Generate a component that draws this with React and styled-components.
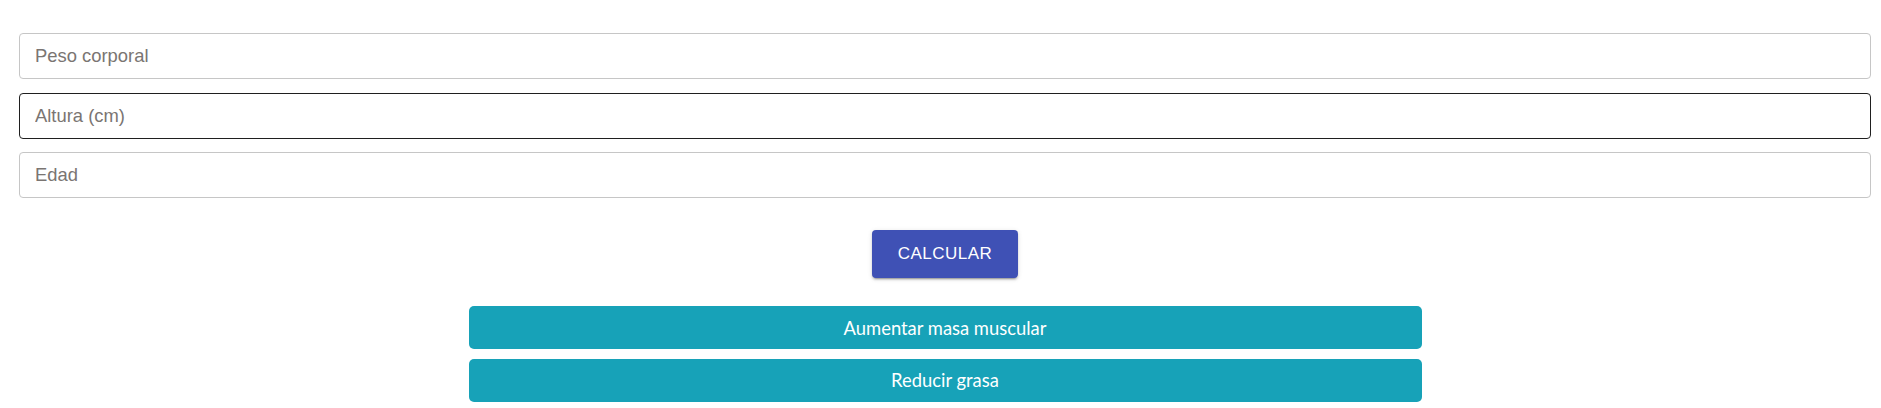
import React from 'react';
import styled, { createGlobalStyle } from 'styled-components';

const GlobalStyle = createGlobalStyle`
  body {
    margin: 0;
    background: #fff;
    font-family: 'Liberation Sans', Arial, sans-serif;
  }
`;

const Page = styled.div`
  padding: 33px 10px 0 19px;
  display: flex;
  flex-direction: column;
`;

const Form = styled.form`
  display: flex;
  flex-direction: column;
  gap: 13.5px;
`;

const Field = styled.input`
  box-sizing: border-box;
  height: 46px;
  width: 100%;
  padding: 0 15px;
  border: 1px solid ${(p) => (p.$active ? '#1f1f1f' : '#c6c6c6')};
  border-radius: 4px;
  font-family: 'Liberation Sans', Arial, sans-serif;
  font-size: 18.4px;
  color: #222;
  background: #fff;
  outline: none;
  &::placeholder {
    color: #7a7572;
  }
`;

const Actions = styled.div`
  display: flex;
  justify-content: center;
  margin-top: 32px;
`;

const CalcButton = styled.button`
  height: 48px;
  padding: 0 26px;
  border: none;
  border-radius: 4px;
  background: #3f51b5;
  color: #fff;
  font-family: 'Liberation Sans', Arial, sans-serif;
  font-size: 17px;
  letter-spacing: 0.5px;
  text-transform: uppercase;
  box-shadow: 0px 3px 1px -2px rgba(0, 0, 0, 0.2),
    0px 2px 2px 0px rgba(0, 0, 0, 0.14), 0px 1px 5px 0px rgba(0, 0, 0, 0.12);
  cursor: pointer;
`;

const Goals = styled.div`
  display: flex;
  flex-direction: column;
  align-items: center;
  gap: 9.5px;
  margin-top: 28px;
`;

const GoalButton = styled.button`
  width: 953px;
  height: 43px;
  border: none;
  border-radius: 5px;
  background: #17a2b8;
  color: #fff;
  font-family: Lato, 'Open Sans', sans-serif;
  font-size: 18.4px;
  cursor: pointer;
`;

export default function App() {
  return (
    <>
      <GlobalStyle />
      <Page>
        <Form onSubmit={(e) => e.preventDefault()}>
          <Field type="number" placeholder="Peso corporal" />
          <Field type="number" placeholder="Altura (cm)" $active />
          <Field type="number" placeholder="Edad" />
        </Form>
        <Actions>
          <CalcButton type="button">Calcular</CalcButton>
        </Actions>
        <Goals>
          <GoalButton type="button">Aumentar masa muscular</GoalButton>
          <GoalButton type="button">Reducir grasa</GoalButton>
        </Goals>
      </Page>
    </>
  );
}
